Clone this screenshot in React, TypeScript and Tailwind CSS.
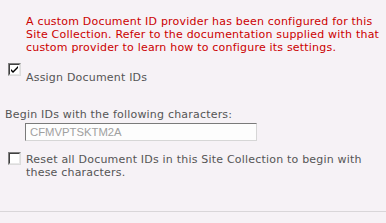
import type { ReactNode } from "react";

function Checkbox({ checked }: { checked?: boolean }) {
  return (
    <span className="relative block w-[13px] h-[13px] shrink-0 bg-white border border-t-[#808080] border-l-[#808080] border-r-[#dcdcdc] border-b-[#dcdcdc]">
      <span className="absolute inset-0 border border-t-[#404040] border-l-[#404040] border-r-[#e8e8e8] border-b-[#e8e8e8]" />
      {checked && (
        <svg className="absolute left-[1px] top-[1px]" width="9" height="9" viewBox="0 0 9 9">
          <path d="M1 4 L3 6 L8 1 L8 3 L3 8 L1 6 Z" fill="#000" />
        </svg>
      )}
    </span>
  );
}

function Label({ children }: { children: ReactNode }) {
  return <span className="whitespace-nowrap">{children}</span>;
}

export default function App() {
  return (
    <div className="w-[386px] h-[223px] bg-[#f6f2f6] overflow-hidden text-[11px] leading-[13px] tracking-[0.2px] font-['DejaVu_Sans',Verdana,sans-serif] text-[#555]">
      {/* provider warning */}
      <div className="pl-[26px] pt-[15px] text-[#cc0000] whitespace-nowrap">
        A custom Document ID provider has been configured for this
        <br />
        Site Collection. Refer to the documentation supplied with that
        <br />
        custom provider to learn how to configure its settings.
      </div>

      {/* assign ids */}
      <div className="flex gap-[5px] pl-[8px] mt-[9px]">
        <Checkbox checked />
        <div className="pt-[8px]">
          <Label>Assign Document IDs</Label>
        </div>
      </div>

      {/* prefix */}
      <div className="pl-[5px] mt-[24px]">
        <Label>Begin IDs with the following characters:</Label>
      </div>
      <div className="ml-[25px] mt-[2px] w-[232px] h-[18px] bg-[#fdfdfd] border border-t-[#7a7a7a] border-l-[#7a7a7a] border-r-[#d6d6d6] border-b-[#d6d6d6] flex items-center px-[4px] tracking-normal text-[#a0a0a0] text-[11.3px] font-['Liberation_Sans',Arial,sans-serif]">
        CFMVPTSKTM2A
      </div>

      {/* reset */}
      <div className="flex gap-[5px] pl-[8px] mt-[11px]">
        <Checkbox />
        <div className="pt-[1px]">
          <Label>
            Reset all Document IDs in this Site Collection to begin with
            <br />
            these characters.
          </Label>
        </div>
      </div>

      <div className="mt-[32px] border-t border-[#d9d6d9]" />
    </div>
  );
}
